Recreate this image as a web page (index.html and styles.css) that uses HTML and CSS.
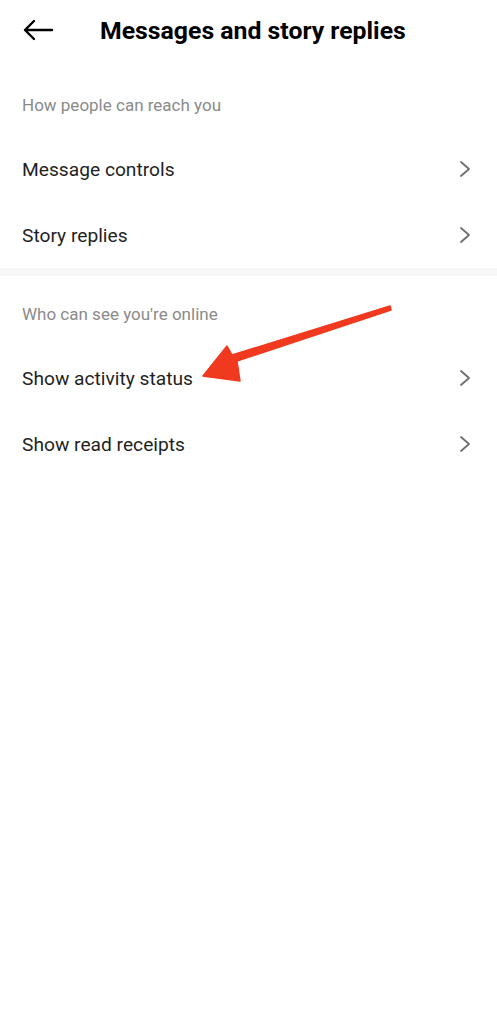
FILE: index.html
```html
<!DOCTYPE html>
<html>
<head>
<meta charset="utf-8">
<link rel="stylesheet" href="styles.css">
</head>
<body>
<div class="page">
  <header class="topbar">
    <svg class="back" width="32" height="22" viewBox="0 0 32 22"><path d="M30 11H3M12 2L3 11l9 9" fill="none" stroke="#000" stroke-width="2.4" stroke-linecap="round" stroke-linejoin="round"/></svg>
    <h1 class="title">Messages and story replies</h1>
  </header>
  <section class="group first">
    <div class="group-title">How people can reach you</div>
    <div class="row"><span>Message controls</span><svg class="chev" width="12" height="18" viewBox="0 0 12 18"><path d="M2 2l8 7-8 7" fill="none" stroke="#6e6e6e" stroke-width="1.8" stroke-linecap="round" stroke-linejoin="round"/></svg></div>
    <div class="row"><span>Story replies</span><svg class="chev" width="12" height="18" viewBox="0 0 12 18"><path d="M2 2l8 7-8 7" fill="none" stroke="#6e6e6e" stroke-width="1.8" stroke-linecap="round" stroke-linejoin="round"/></svg></div>
  </section>
  <div class="divider"></div>
  <section class="group second">
    <div class="group-title">Who can see you're online</div>
    <div class="row"><span>Show activity status</span><svg class="chev" width="12" height="18" viewBox="0 0 12 18"><path d="M2 2l8 7-8 7" fill="none" stroke="#6e6e6e" stroke-width="1.8" stroke-linecap="round" stroke-linejoin="round"/></svg></div>
    <div class="row"><span>Show read receipts</span><svg class="chev" width="12" height="18" viewBox="0 0 12 18"><path d="M2 2l8 7-8 7" fill="none" stroke="#6e6e6e" stroke-width="1.8" stroke-linecap="round" stroke-linejoin="round"/></svg></div>
  </section>
  <svg class="arrow" width="497" height="420" viewBox="0 0 497 420">
    <polygon points="390,306 391,310 237,361 240,381 203,376 227,346 232,355" fill="#f0391f" stroke="#f0391f" stroke-width="1.5" stroke-linejoin="round"/>
  </svg>
</div>
</body>
</html>
```
FILE: styles.css
```css
* { box-sizing: border-box; }
html, body { margin: 0; padding: 0; background: #fff; }
body { font-family: Roboto, "Noto Sans", Arial, sans-serif; color: #1c1c1c; }
.page { position: relative; width: 497px; min-height: 1024px; background: #fff; }
.topbar { height: 60px; display: flex; align-items: center; padding-left: 22px; }
.back { flex: none; }
.title { margin: 0 0 0 46px; font-size: 24.8px; font-weight: 700; color: #000; white-space: nowrap; }
.group { display: flex; flex-direction: column; }
.group.first { padding-top: 25px; }
.group.second { padding-top: 18px; }
.group-title { height: 40px; display: flex; align-items: center; padding-left: 22px; font-size: 17px; color: #8a8a8a; margin-bottom: 11px; }
.row { height: 66px; display: flex; align-items: center; justify-content: space-between; padding: 0 26px 0 22px; font-size: 19.2px; color: #1f1f1f; }
.divider { height: 8px; background: #f6f6f6; }
.arrow { position: absolute; left: 0; top: 0; pointer-events: none; }
```
